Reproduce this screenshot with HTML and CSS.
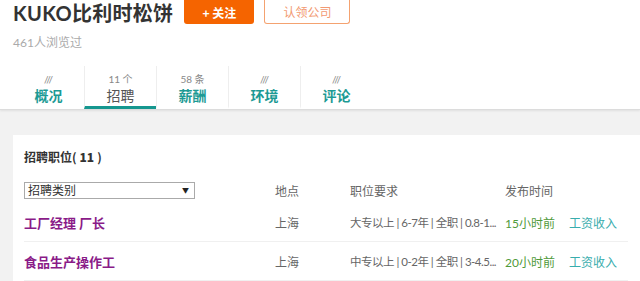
FILE: index.html
```html
<!DOCTYPE html>
<html lang="zh-CN">
<head>
    <meta charset="UTF-8">
    <meta name="viewport" content="width=device-width, initial-scale=1.0">
    <title>KUKO比利时松饼 - 招聘</title>
    <link rel="stylesheet" href="styles.css">
</head>
<body>
    <div class="header">
        <div class="title-row">
            <h1 class="company-name">KUKO比利时松饼</h1>
            <button class="btn-follow">+ 关注</button>
            <button class="btn-claim">认领公司</button>
        </div>
        <div class="views">461人浏览过</div>

        <ul class="tabs">
            <li class="tab"><span class="tab-count">///</span><span class="tab-label">概况</span></li>
            <li class="tab active"><span class="tab-count">11 个</span><span class="tab-label">招聘</span></li>
            <li class="tab"><span class="tab-count">58 条</span><span class="tab-label">薪酬</span></li>
            <li class="tab"><span class="tab-count">///</span><span class="tab-label">环境</span></li>
            <li class="tab"><span class="tab-count">///</span><span class="tab-label">评论</span></li>
        </ul>
    </div>

    <div class="main">
        <div class="card">
            <h2 class="card-title">招聘职位(<b>11</b>)</h2>

            <div class="job-head">
                <div class="select-box">
                    <span>招聘类别</span>
                    <span class="select-arrow">▼</span>
                </div>
                <span>地点</span>
                <span>职位要求</span>
                <span>发布时间</span>
                <span></span>
            </div>

            <div class="job-row">
                <a href="#" class="job-name">工厂经理 厂长</a>
                <span class="job-city">上海</span>
                <span class="job-req">大专以上 | 6-7年 | 全职 | 0.8-1...</span>
                <span class="job-time">15小时前</span>
                <a href="#" class="job-salary">工资收入</a>
            </div>
            <div class="job-row">
                <a href="#" class="job-name">食品生产操作工</a>
                <span class="job-city">上海</span>
                <span class="job-req">中专以上 | 0-2年 | 全职 | 3-4.5...</span>
                <span class="job-time">20小时前</span>
                <a href="#" class="job-salary">工资收入</a>
            </div>
        </div>
    </div>
</body>
</html>
```

FILE: styles.css
```css
body {
    margin: 0;
    padding: 0;
    font-family: Lato, "Noto Sans CJK SC", sans-serif;
    background-color: #f2f2f2;
    color: #333;
    overflow: hidden;
}

.header {
    background-color: #fff;
    padding-left: 13px;
    border-bottom: 1px solid #dcdcdc;
    box-shadow: 0 1px 2px rgba(0, 0, 0, 0.08);
}

.title-row {
    display: flex;
    align-items: flex-start;
}

.company-name {
    margin: 0;
    font-size: 20px;
    line-height: 26px;
    font-weight: bold;
    color: #333;
    letter-spacing: 0.3px;
}

.btn-follow,
.btn-claim {
    height: 24px;
    padding: 0;
    font-family: "Noto Sans CJK SC", sans-serif;
    font-size: 12px;
    border-radius: 0 0 3px 3px;
    cursor: pointer;
}

.btn-follow {
    width: 70px;
    margin-left: 11px;
    border: none;
    background-color: #f56400;
    color: #fff;
    font-weight: bold;
}

.btn-claim {
    width: 86px;
    margin-left: 10px;
    border: 1px solid #f4a270;
    border-top: none;
    background-color: #fff;
    color: #f29a72;
}

.views {
    margin-top: 9px;
    font-size: 12px;
    line-height: 16px;
    color: #aaa;
}

.tabs {
    list-style: none;
    margin: 15px 0 0 -1px;
    padding: 0;
    display: flex;
}

.tab {
    width: 71px;
    padding-top: 6px;
    padding-bottom: 2px;
    border-left: 1px solid #eee;
    border-bottom: 3px solid transparent;
    display: flex;
    flex-direction: column;
    align-items: center;
}

.tab:first-child {
    border-left-color: transparent;
}

.tab-count {
    font-size: 10px;
    line-height: 14px;
    color: #888;
}

.tab-label {
    font-family: "Noto Sans CJK SC", sans-serif;
    font-size: 14px;
    line-height: 18px;
    font-weight: bold;
    color: #1c9a94;
}

.tab.active {
    border-bottom-color: #15978f;
}

.tab.active .tab-label {
    color: #555;
    font-weight: normal;
}

.main {
    padding: 25px 0 0 13px;
}

.card {
    background-color: #fff;
    padding: 14px 0 0 11px;
    min-height: 200px;
}

.card-title {
    margin: 0;
    font-family: "Noto Sans CJK SC", sans-serif;
    font-size: 12px;
    line-height: 16px;
    font-weight: bold;
    color: #333;
}

.card-title b {
    padding: 0 3px;
}

.job-head,
.job-row {
    display: grid;
    grid-template-columns: 251px 75px 155px 64px 1fr;
    align-items: center;
    font-family: Lato, "Noto Sans CJK SC", sans-serif;
    font-size: 12px;
    white-space: nowrap;
}

.job-head {
    margin-top: 17px;
    color: #666;
}

.select-box {
    width: 164px;
    height: 15px;
    padding: 0 2px 0 3px;
    border: 1px solid #aaa;
    display: flex;
    justify-content: space-between;
    align-items: center;
    line-height: 15px;
    color: #333;
}

.select-arrow {
    font-size: 7px;
    color: #222;
    padding-right: 3px;
}

.job-row {
    height: 38px;
    border-bottom: 1px solid #f0f0f0;
    margin-right: 12px;
    color: #666;
}

.job-head + .job-row {
    margin-top: 4px;
}

.job-name {
    font-family: "Noto Sans CJK SC", sans-serif;
    font-size: 13px;
    font-weight: bold;
    color: #8a1b88;
    text-decoration: none;
}

.job-req {
    overflow: hidden;
    font-size: 11.5px;
    letter-spacing: -0.5px;
}

.job-time {
    color: #4f9a3a;
}

.job-salary {
    color: #38adad;
    text-decoration: none;
}
```
